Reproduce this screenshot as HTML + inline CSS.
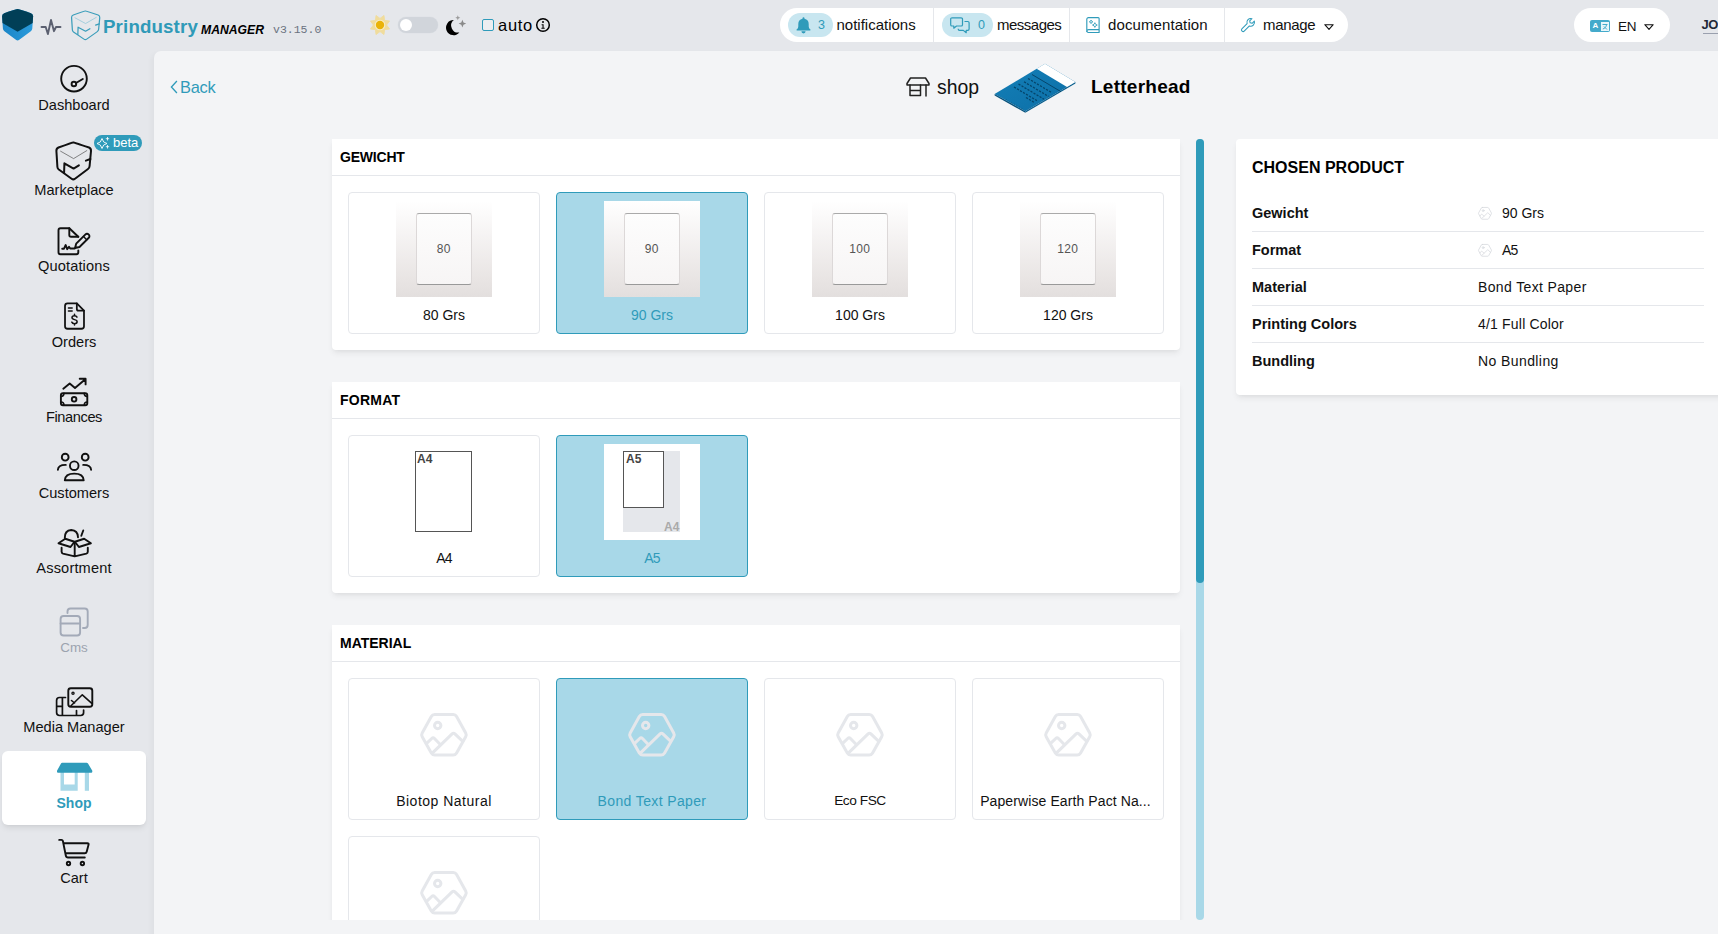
<!DOCTYPE html>
<html lang="en">
<head>
<meta charset="utf-8">
<title>Prindustry Manager - Shop - Letterhead</title>
<style>
*{box-sizing:border-box;margin:0;padding:0}
html,body{width:1718px;height:934px;overflow:hidden}
body{background:#e5e7eb;font-family:"Liberation Sans",sans-serif;color:#111;position:relative;font-size:15px}
.abs{position:absolute}
svg{display:block;overflow:visible}
/* ---------- top bar ---------- */
#top{position:absolute;left:0;top:0;width:1718px;height:51px}
.brand{position:absolute;left:103px;top:15px;font-size:18.700px;font-weight:bold;color:#2f9ab8;letter-spacing:.15px;line-height:24px;white-space:nowrap}
.mgr{position:absolute;left:201px;top:21.500px;font-size:12.200px;font-weight:bold;font-style:italic;color:#000;line-height:16px;white-space:nowrap}
.ver{position:absolute;left:273px;top:22px;font-family:"Liberation Mono",monospace;font-size:11.500px;color:#6b7280;line-height:16px;white-space:nowrap}
.toggle{position:absolute;left:398px;top:17px;width:40px;height:16px;border-radius:8px;background:#d1d5db;box-shadow:0 0 0 .5px #dfe2e7}
.toggle i{position:absolute;left:2px;top:2px;width:12px;height:12px;border-radius:50%;background:#fff}
.chk{position:absolute;left:482px;top:19px;width:12px;height:12px;border:1.5px solid #2f9bba;border-radius:2px;background:#eceef1}
.auto{position:absolute;left:498px;top:14px;font-size:16.500px;letter-spacing:.7px;line-height:22px;color:#000}
.pill{position:absolute;top:8px;height:34px;background:#fff;border-radius:17px}
.navtxt{position:absolute;top:0;line-height:34px;font-size:15px;color:#111;white-space:nowrap}
.sep{position:absolute;top:0;width:1px;height:34px;background:#e5e7eb}
.badge{position:absolute;top:5px;height:24px;border-radius:12px;background:#c8e6f0}
.badge span{position:absolute;top:0;line-height:24px;font-size:12.500px;color:#2f9bba}
/* ---------- sidebar ---------- */
.sb{position:absolute;left:0;width:148px;text-align:center;font-size:14.600px;line-height:20px;color:#111;white-space:nowrap}
.sbi{position:absolute}
/* ---------- main ---------- */
#main{position:absolute;left:154px;top:51px;width:1600px;height:900px;background:#f3f4f6;border-top-left-radius:7px;box-shadow:-3px 2px 5px rgba(0,0,0,.03)}
.panel{position:absolute;left:332px;width:848px;background:#fff;border-radius:0 0 4px 4px;box-shadow:0 4px 6px -1px rgba(0,0,0,.07),0 2px 4px -2px rgba(0,0,0,.05)}
.ph{height:37px;border-bottom:1px solid #e5e7eb;padding:0 0 0 8px;line-height:36px;font-size:14px;font-weight:bold;letter-spacing:0;text-transform:uppercase;color:#000}
.card{position:absolute;width:192px;height:142px;border:1px solid #e5e7eb;border-radius:4px;background:#fff}
.card.sel{background:#a8d8e8;border-color:#2f9bba}
.card .lbl{position:absolute;left:0;right:0;top:112px;text-align:center;font-size:14px;line-height:20px;color:#111;white-space:nowrap}
.card.sel .lbl{color:#2f9bba}
.img{position:absolute;left:47px;top:8px;width:96px;height:96px}
.gw{background:linear-gradient(#fff 0%,#fbfafa 15%,#e9e5e4 80%,#e3dfde 100%)}
.gw b{position:absolute;left:20px;top:12px;width:55.500px;height:72px;border-radius:3px;background:linear-gradient(#fdfdfd,#f7f5f5);border:1px solid #dcd8d8;border-top-color:#aaa;border-bottom-color:#999;font-weight:normal;font-size:12px;letter-spacing:.3px;color:#555;text-align:center;line-height:70px}
</style>
</head>
<body>
<div id="top"><svg class="abs" style="left:0;top:0" width="110" height="51" viewBox="0 0 110 51"><defs><linearGradient id="cb" x1="0" y1="0" x2="1" y2="0"><stop offset="0" stop-color="#1b85c6"/><stop offset="1" stop-color="#2a9bdc"/></linearGradient></defs>
<path d="M17.600 9Q18.500 9 31 13.200Q33.200 14 33.100 16.300L32.300 28.500Q32.200 30.200 30.800 31.200L19.300 39.800Q17.600 41.200 15.900 39.800L4.400 31.200Q3 30.200 2.900 28.500L2.100 16.300Q2 14 4.200 13.200Q16.700 9 17.600 9z" fill="url(#cb)"/>
<path d="M17.600 9Q18.500 9 31 13.200Q33.200 14 33.100 16.300L32.700 23L17.600 31.700L2.500 23L2.100 16.300Q2 14 4.200 13.200Q16.700 9 17.600 9z" fill="#013f57"/>
<path d="M41.500 27H45.700L47.900 34L51 20L54 31.200L56 27H60.500" fill="none" stroke="#5b6070" stroke-width="1.900" stroke-linecap="round" stroke-linejoin="round"/>
<g transform="translate(71.400 10.900) scale(.815 .775) translate(-56.200 -142.300)" fill="none" stroke="#3a9dba" stroke-linecap="round" stroke-linejoin="round"><path d="M73.300 142.400Q74 142.300 89 147.500Q91.200 148.500 91 151L89.600 166Q89.500 168 88 169L75 178.700Q73.300 180 71.600 178.700L58.800 169.500Q57.500 168.500 57.400 167L56.400 151Q56.200 148.500 58.500 147.500Q72.500 142.300 73.300 142.400z" stroke-width="1.500"/><path d="M60.600 151.200L73.600 158.600L86.800 150.600" stroke-width=".8" stroke="#7fc0d4"/><path d="M64.100 172.800L64.400 163.300L73.600 168.600L78.900 165.300" stroke-width="1.500"/><path d="M85.900 160.600L90.400 159" stroke-width="1.500"/></g></svg>
<div class="brand">Prindustry</div><div class="mgr">MANAGER</div><div class="ver">v3.15.0</div>
<svg class="abs" style="left:370px;top:15px" width="20" height="20" viewBox="0 0 20 20"><polygon points="13.98,0.39 14.67,5.33 19.61,6.02 16.60,10.00 19.61,13.98 14.67,14.67 13.98,19.61 10.00,16.60 6.02,19.61 5.33,14.67 0.39,13.98 3.40,10.00 0.39,6.02 5.33,5.33 6.02,0.39 10.00,3.40" fill="#f0dc9c" stroke="#f0dc9c" stroke-width=".8" stroke-linejoin="round"/><circle cx="10" cy="10" r="5.200" fill="#f8edc6"/><circle cx="10" cy="10" r="4.200" fill="#eab308"/></svg>
<div class="toggle"><i></i></div>
<svg class="abs" style="left:445px;top:14px" width="22" height="22" viewBox="0 0 22 22"><path d="M8.800 6A7.600 7.600 0 1 0 14.400 18.500A7.100 7.100 0 0 1 8.800 6z" fill="#000"/><path d="M12.800 1.300l.7 1.800 1.800.7-1.800.7-.7 1.800-.7-1.800-1.800-.7 1.800-.7z" fill="#9a9a9a"/><path d="M17.400 5.800l1.100 2.700 2.700 1.100-2.700 1.100-1.100 2.700-1.100-2.700-2.700-1.100 2.700-1.100z" fill="#8a8a8a"/></svg>
<div class="chk"></div><div class="auto">auto</div>
<svg class="abs" style="left:535px;top:17px" width="16" height="16" viewBox="0 0 16 16"><circle cx="8" cy="8" r="6.300" fill="none" stroke="#000" stroke-width="1.500"/><circle cx="8" cy="4.900" r="1" fill="#000"/><path d="M6.600 7.200h2v3.600h1.100v1H6.400v-1h1.100V8.200H6.600z" fill="#000"/></svg>
<div class="pill" style="left:780px;width:568px"><div class="badge" style="left:8px;width:44.500px"><span style="left:30px">3</span></div><svg class="abs" style="left:15.700px;top:9px" width="15" height="17" viewBox="0 0 15 17"><path d="M7.500.2a1 1 0 0 1 1 1v.6a5.200 5.200 0 0 1 4.200 5.100v2c0 1.400.5 2.500 1.500 3.400.6.500.3 1.300-.5 1.300H1.300c-.8 0-1.100-.8-.5-1.300 1-.9 1.500-2 1.500-3.400v-2a5.200 5.200 0 0 1 4.200-5.100v-.6a1 1 0 0 1 1-1z" fill="#2f9bba"/><path d="M5.400 14.300h4.200a2.100 2.100 0 0 1-4.200 0z" fill="#2f9bba"/></svg><div class="navtxt" style="left:56.500px">notifications</div><div class="sep" style="left:153px"></div><div class="badge" style="left:162px;width:50.500px"><span style="left:36px">0</span></div><svg class="abs" style="left:169.500px;top:9px" width="20" height="16" viewBox="0 0 20 16" fill="none" stroke="#2f9bba" stroke-width="1.200" stroke-linejoin="round"><path d="M2 .8h9.200a1.300 1.300 0 0 1 1.300 1.300v5.600a1.300 1.300 0 0 1-1.300 1.300H6.500L3.800 11.200V9H2A1.300 1.300 0 0 1 .7 7.700V2.100A1.300 1.300 0 0 1 2 .8z"/><path d="M14.500 4.500h3.300a1.300 1.300 0 0 1 1.300 1.300v6.300a1.300 1.300 0 0 1-1.300 1.300h-1.600v2.300l-2.900-2.300H9.500a1.300 1.300 0 0 1-1.300-1.300V11.700"/></svg><div class="navtxt" style="left:217px;letter-spacing:-.5px">messages</div><div class="sep" style="left:289px"></div><svg class="abs" style="left:306px;top:8.500px" width="14.300" height="16.100" viewBox="0 0 15 17" fill="none" stroke="#2f9bba" stroke-width="1.200" stroke-linejoin="round"><path d="M2.500 .7h10.300a1 1 0 0 1 1 1v11.600H2.800A2 2 0 0 0 .8 15.300V2.400A1.700 1.700 0 0 1 2.500 .7z"/><path d="M.8 15a1.700 1.700 0 0 0 1.700 1.400h11.300v-3"/><path d="M5.300 3.200l.6 1.300 1.300.6-1.300.6-.6 1.300-.6-1.300-1.300-.6 1.300-.6zM9.300 6l.8 1.700 1.700.8-1.700.8-.8 1.700-.8-1.700-1.700-.8 1.700-.8z" stroke-width=".9"/></svg><div class="navtxt" style="left:328px;letter-spacing:.1px">documentation</div><div class="sep" style="left:443.500px"></div><svg class="abs" style="left:460.500px;top:9.500px" width="14.500" height="14.500" viewBox="0 0 15 15" fill="none" stroke="#2f9bba" stroke-width="1.100" stroke-linejoin="round" stroke-linecap="round"><path d="M13.800 3.200L11.500 5.500 9.500 5 9 3 11.300.7A4 4 0 0 0 6.300 5.800L.9 11.200a1.500 1.500 0 0 0 0 2.100l.3.300a1.500 1.500 0 0 0 2.100 0L8.700 8.200A4 4 0 0 0 13.800 3.200z"/></svg><div class="navtxt" style="left:483px;letter-spacing:-.3px">manage</div><svg class="abs" style="left:543.500px;top:15.500px" width="10" height="6" viewBox="0 0 10 6" fill="none" stroke="#111" stroke-width="1.100" stroke-linejoin="round"><path d="M.8.700h8.400L5 5.300z"/></svg></div>
<div class="pill" style="left:1574px;width:96px"><div class="abs" style="left:16px;top:12px;width:20px;height:12px;border-radius:2px;background:#44aacb"></div><div class="abs" style="left:18.500px;top:12px;font-size:8px;line-height:12px;font-weight:bold;color:#fff">A</div><div class="abs" style="left:26.500px;top:13.500px;width:8px;height:9px;background:#e8f5fa"></div><svg class="abs" style="left:27.500px;top:14.500px" width="6" height="7" viewBox="0 0 6 7" fill="none" stroke="#44aacb" stroke-width="1"><path d="M.5 1.500h5M4.500 1.500C4.500 4 2.500 5.500 .8 6M2 3.500l3 3"/></svg><div class="navtxt" style="left:44px;top:1.500px;font-size:13.500px;letter-spacing:-.3px">EN</div><svg class="abs" style="left:69.500px;top:16px" width="10" height="6" viewBox="0 0 10 6" fill="none" stroke="#111" stroke-width="1.100" stroke-linejoin="round"><path d="M.8.700h8.400L5 5.300z"/></svg></div>
<div class="abs" style="left:1701.500px;top:16px;font-size:13px;line-height:18px;font-weight:bold;color:#1f2937;white-space:nowrap;height:19px;letter-spacing:-.6px">JOHN</div><div class="abs" style="left:1703px;top:33px;width:20px;height:1px;background:#9aa0ae"></div></div>
<div id="side"><div class="abs" style="left:2px;top:751px;width:144px;height:74px;background:#fff;border-radius:6px;box-shadow:0 4px 6px -1px rgba(0,0,0,.08),0 2px 4px -2px rgba(0,0,0,.06)"></div>
<svg class="abs" style="left:0;top:0" width="154" height="934" viewBox="0 0 154 934" fill="none" stroke="#111" stroke-width="1.900" stroke-linecap="round" stroke-linejoin="round"><g id="i-dash"><circle cx="74" cy="78.700" r="12.800"/><circle cx="73.900" cy="84" r="2.300"/><path d="M76 83l6.800-4"/></g><g id="i-market"><path d="M73.300 142.400Q74 142.300 89 147.500Q91.200 148.500 91 151L89.600 166Q89.500 168 88 169L75 178.700Q73.300 180 71.600 178.700L58.800 169.500Q57.500 168.500 57.400 167L56.400 151Q56.200 148.500 58.500 147.500Q72.500 142.300 73.300 142.400z" stroke-width="2"/><path d="M60.600 151.200L73.600 158.600L86.800 150.600" stroke="#555" stroke-width=".7"/><path d="M64.100 172.800L64.400 163.300L73.600 168.600L78.900 165.300" stroke-width="2"/><path d="M85.900 160.600L90.400 159" stroke-width="2"/></g>
<g id="i-quot"><path d="M78.300 250.500V252.300Q78.300 254.300 76.300 254.300H60.500Q58.500 254.300 58.500 252.300V230.200Q58.500 228.200 60.500 228.200H69.300L78.300 236.800"/><path d="M69.300 228.200V235Q69.300 236.800 71.100 236.800H78.300"/><path d="M62.200 248.700h1.800l1.700-3.700 1.500 4.200 1.800-2.400 1.200 1.700h4.500"/><path d="M75 248l1.200-4.300L85.500 234.400a2.100 2.100 0 0 1 3 0l.3.300a2.100 2.100 0 0 1 0 3L79.500 247z"/><path d="M83.500 236.500l3.200 3.200" stroke-width="1.400"/></g>
<g id="i-ord" transform="translate(74.500 316.100) scale(.93) translate(-74.500 -316.100)"><path d="M77 302.500H67Q64.300 302.500 64.300 305.200V327Q64.300 329.700 67 329.700H82Q84.700 329.700 84.700 327V310.200z"/><path d="M77 302.500V308.400Q77 310.200 78.800 310.200H84.700"/><path d="M68 307.300h4M68 310.700h4" stroke-width="1.600"/><path d="M77.200 317.200Q76.500 315.700 74.500 315.700Q71.800 315.700 71.800 317.700Q71.800 319.300 74.500 319.900Q77.300 320.500 77.300 322.200Q77.300 324.200 74.500 324.200Q72.300 324.200 71.600 322.600M74.500 314.200v1.500M74.500 324.200v1.500" stroke-width="1.600"/></g>
<g id="i-fin"><rect x="60.900" y="393.300" width="26.400" height="12" rx="2"/><circle cx="74.100" cy="399.300" r="2.300"/><path d="M60.900 396.500Q64 396.500 64 393.300M87.300 396.500Q84.200 396.500 84.200 393.300M60.900 402.100Q64 402.100 64 405.300M87.300 402.100Q84.200 402.100 84.200 405.300" stroke-width="1.500"/><path d="M63.300 388.700L69.700 383.500L75 388L85.300 379.200M79.700 378.800H85.600V384.400"/></g>
<g id="i-cust"><circle cx="74.250" cy="465.700" r="4.300"/><path d="M64.800 480.200Q65.200 473.600 74.250 473.600Q83.300 473.600 83.700 480.200z"/><circle cx="65.200" cy="457.200" r="3.400"/><circle cx="85.200" cy="457.200" r="3.400"/><path d="M57.900 469.800Q58.200 464.800 65.800 464.900M91.100 469.800Q90.800 464.800 83.200 464.900"/></g>
<g id="i-assort"><path d="M61.600 547.800V551.800Q61.600 553.200 63 553.600L74.700 556.400L86.400 553.600Q87.800 553.200 87.800 551.800V547.800M74.700 542.500V556"/><path d="M65.250 538.750L74.500 541.750L70.500 547L58.500 543.250zM84.150 538.750L74.900 541.750L78.900 547L90.900 543.250z"/><path d="M64.800 538Q64.600 530.500 71.250 530Q77.800 530.300 78 537.250M83.250 530.500L81.300 535.750"/></g>
<g id="i-cms" stroke="#a3aab8"><rect x="60.600" y="616" width="19.500" height="19.500" rx="3"/><path d="M60.600 623.500H80.100"/><path d="M67.500 613V611.500Q67.500 608.500 70.500 608.500H84.700Q87.700 608.500 87.700 611.500V625Q87.700 628 84.700 628H83"/></g>
<g id="i-media"><rect x="68.300" y="688.200" width="24" height="18.600" rx="2.500"/><circle cx="73" cy="693.200" r="1.100" stroke-width="1.300"/><path d="M71 705.800L82.300 694.800L91.800 703.400M71.500 700.500L74.500 703" stroke-width="1.600"/><path d="M65.500 697.500H59.500Q56.600 697.500 56.600 700.400V712.600Q56.600 715.500 59.500 715.500H80.700Q83.600 715.500 83.600 712.600V710M62.400 697.500V715.500M56.600 706.300H62.400M76.500 710.500V715.500" stroke-width="1.700"/></g>
<g id="i-shop" stroke="none"><path d="M60.500 772H77.700V790.800H60.500zM64 772V784.500H74.700V772z" fill="#a8d8e8" fill-rule="evenodd"/><path d="M84.800 772H89V790.800H84.800z" fill="#a8d8e8"/><path d="M62.200 762.800H86.600Q87.500 762.800 88 763.600L92.300 770.800V771.800Q92.300 772.800 91.300 772.800H58Q57 772.800 57 771.800V770.800L61 763.600Q61.400 762.800 62.200 762.800z" fill="#2f9bba"/></g>
<g id="i-cart"><path d="M59.200 839.900H61.500Q62.600 839.900 62.900 841L65.800 855.500Q66.200 857.500 68 857.500H84.800M63.400 843.200H87.500Q88.900 843.200 88.600 844.600L86.700 851.800Q86.300 853.300 84.800 853.300H65.400"/><circle cx="68.500" cy="863.500" r="1.700"/><circle cx="82.400" cy="863.500" r="1.700"/></g>
</svg>
<div class="abs" style="left:94px;top:135px;width:48px;height:16px;border-radius:8px;background:#2f9bba"></div>
<svg class="abs" style="left:97px;top:136.500px" width="14" height="12" viewBox="0 0 14 12" fill="none" stroke="#fff" stroke-width=".9" stroke-linejoin="round"><path d="M5 1.500L6.700 5L10 6.500L6.700 8L5 11.500L3.300 8L0 6.500L3.300 5z"/><path d="M10.500 0v3.500M8.800 1.700h3.400M10.500 8v3.500M8.800 9.700h3.400" stroke-width=".8"/></svg>
<div class="abs" style="left:113px;top:135px;font-size:13px;line-height:16px;color:#fff">beta</div>
<div class="sb" style="top:95px;">Dashboard</div>
<div class="sb" style="top:180px;">Marketplace</div>
<div class="sb" style="top:256px;letter-spacing:.12px;">Quotations</div>
<div class="sb" style="top:332px;">Orders</div>
<div class="sb" style="top:407px;letter-spacing:-.4px;">Finances</div>
<div class="sb" style="top:483px;">Customers</div>
<div class="sb" style="top:558px;letter-spacing:.15px;">Assortment</div>
<div class="sb" style="top:638px;color:#9ca3af;font-size:13.400px;">Cms</div>
<div class="sb" style="top:717px;">Media Manager</div>
<div class="sb" style="top:793px;color:#2f9bba;font-weight:bold;font-size:14px;">Shop</div>
<div class="sb" style="top:868px;">Cart</div></div>
<div id="main"></div>
<svg class="abs" style="left:170px;top:80px" width="8" height="14" viewBox="0 0 8 14" fill="none" stroke="#2f9bba" stroke-width="1.300" stroke-linecap="butt" stroke-linejoin="miter"><path d="M6.900 1L1.400 7l5.500 6"/></svg>
<div class="abs" style="left:180px;top:76px;font-size:16.400px;letter-spacing:-.25px;line-height:22px;color:#2f9bba">Back</div>
<svg class="abs" style="left:906px;top:77px" width="24" height="20" viewBox="0 0 24 20" fill="none" stroke="#222" stroke-width="1.500" stroke-linejoin="round" stroke-linecap="round"><path d="M4.500 1h15l3.500 5.500v1.500H1V6.500z"/><path d="M4 8v10.500h10.500V8M4 13.500h10.500M20 8v11"/></svg>
<div class="abs" style="left:937px;top:74px;font-size:19.400px;line-height:26px;color:#111">shop</div>
<div class="abs" style="left:1091px;top:75px;font-size:19px;letter-spacing:.25px;line-height:24px;font-weight:bold;color:#000">Letterhead</div>
<svg class="abs" style="left:994px;top:63px" width="82" height="51" viewBox="0 0 82 51"><defs><linearGradient id="lg1" x1="0" y1="0" x2="1" y2="1"><stop offset="0" stop-color="#1480b8"/><stop offset="1" stop-color="#0c6ea6"/></linearGradient></defs><path d="M.6 31L51 .8L81.400 19L31.300 48.200z" fill="url(#lg1)"/><path d="M.6 31L31.300 48.200V49.800L.6 32.500z" fill="#07527c"/><path d="M31.300 48.200L81.400 19V20.500L31.300 49.800z" fill="#0a5f8e"/><path d="M51 .8L81.400 19L73 23.900L42.600 5.800z" fill="#fff"/><path d="M38 11.500L67 28.700" stroke="#05456b" stroke-width="1" fill="none"/><g stroke="#05456b" stroke-width="1.300" stroke-dasharray="2.200 1.300" fill="none"><path d="M34 15.500L58 29.800M30 18.800L54.500 33.400M24.500 21L50 36.200M20 24L44 38.300M32 34.500L41 39.900"/></g><path d="M12 36.300L30 46.400" stroke="#0a5f8e" stroke-width=".8" stroke-dasharray="1 2" fill="none"/></svg>
<div class="panel" style="top:139px;height:211px"><div class="ph" style="letter-spacing:-.2px">Gewicht</div><div class="card" style="left:16px;top:53px"><div class="img gw"><b>80</b></div><div class="lbl">80 Grs</div></div><div class="card sel" style="left:224px;top:53px"><div class="img gw"><b>90</b></div><div class="lbl">90 Grs</div></div><div class="card" style="left:432px;top:53px"><div class="img gw"><b>100</b></div><div class="lbl">100 Grs</div></div><div class="card" style="left:640px;top:53px"><div class="img gw"><b>120</b></div><div class="lbl">120 Grs</div></div></div>
<div class="panel" style="top:382px;height:211px"><div class="ph" style="letter-spacing:.25px">Format</div><div class="card" style="left:16px;top:53px"><div class="img"><div class="abs" style="left:19px;top:7px;width:57px;height:81px;border:1px solid #555;background:#fff"></div><div class="abs" style="left:21px;top:7px;font-size:12px;font-weight:bold;color:#444;line-height:16px">A4</div></div><div class="lbl" style="letter-spacing:-.9px">A4</div></div><div class="card sel" style="left:224px;top:53px"><div class="img" style="background:#fff"><div class="abs" style="left:19px;top:7px;width:57px;height:81px;background:#e5e7eb"></div><div class="abs" style="left:19px;top:7px;width:41px;height:57px;border:1px solid #555;background:#fff"></div><div class="abs" style="left:22px;top:7px;font-size:12px;font-weight:bold;color:#444;line-height:16px">A5</div><div class="abs" style="left:60px;top:75px;font-size:12px;font-weight:bold;color:#aaa;line-height:16px">A4</div></div><div class="lbl" style="letter-spacing:-.9px">A5</div></div></div>
<div class="abs" style="left:320px;top:600px;width:880px;height:320px;overflow:hidden"><div class="panel" style="left:12px;top:25px;height:400px"><div class="ph">Material</div><div class="card" style="left:16px;top:53px"><svg class="abs" style="left:71px;top:34px" width="48" height="44" viewBox="0 0 48 44" fill="none" stroke="#e5e7eb" stroke-width="3" stroke-linejoin="round" stroke-linecap="round"><path d="M14.800 1.600h18.300a4 4 0 0 1 3.500 2l9.100 16.300a4 4 0 0 1 0 3.900l-9.100 16.300a4 4 0 0 1-3.500 2H14.800a4 4 0 0 1-3.500-2L2.200 23.800a4 4 0 0 1 0-3.900L11.300 3.600a4 4 0 0 1 3.500-2z"/><circle cx="17.700" cy="12.500" r="3.200"/><path d="M6.900 30.100l4.800-4.600a2 2 0 0 1 2.800 0l5.500 5.700M12.800 39.600l19.300-18.700a2 2 0 0 1 2.800 0l7.600 7.300"/></svg><div class="lbl" style="letter-spacing:0.5px">Biotop Natural</div></div><div class="card sel" style="left:224px;top:53px"><svg class="abs" style="left:71px;top:34px" width="48" height="44" viewBox="0 0 48 44" fill="none" stroke="#e5e7eb" stroke-width="3" stroke-linejoin="round" stroke-linecap="round"><path d="M14.800 1.600h18.300a4 4 0 0 1 3.500 2l9.100 16.300a4 4 0 0 1 0 3.900l-9.100 16.300a4 4 0 0 1-3.500 2H14.800a4 4 0 0 1-3.500-2L2.200 23.800a4 4 0 0 1 0-3.900L11.300 3.600a4 4 0 0 1 3.500-2z"/><circle cx="17.700" cy="12.500" r="3.200"/><path d="M6.900 30.100l4.800-4.600a2 2 0 0 1 2.800 0l5.500 5.700M12.800 39.600l19.300-18.700a2 2 0 0 1 2.800 0l7.600 7.300"/></svg><div class="lbl" style="letter-spacing:0.37px">Bond Text Paper</div></div><div class="card" style="left:432px;top:53px"><svg class="abs" style="left:71px;top:34px" width="48" height="44" viewBox="0 0 48 44" fill="none" stroke="#e5e7eb" stroke-width="3" stroke-linejoin="round" stroke-linecap="round"><path d="M14.800 1.600h18.300a4 4 0 0 1 3.500 2l9.100 16.300a4 4 0 0 1 0 3.900l-9.100 16.300a4 4 0 0 1-3.500 2H14.800a4 4 0 0 1-3.500-2L2.200 23.800a4 4 0 0 1 0-3.900L11.300 3.600a4 4 0 0 1 3.500-2z"/><circle cx="17.700" cy="12.500" r="3.200"/><path d="M6.900 30.100l4.800-4.600a2 2 0 0 1 2.800 0l5.500 5.700M12.800 39.600l19.300-18.700a2 2 0 0 1 2.800 0l7.600 7.300"/></svg><div class="lbl" style="font-size:13.700px;letter-spacing:-.45px">Eco FSC</div></div><div class="card" style="left:640px;top:53px"><svg class="abs" style="left:71px;top:34px" width="48" height="44" viewBox="0 0 48 44" fill="none" stroke="#e5e7eb" stroke-width="3" stroke-linejoin="round" stroke-linecap="round"><path d="M14.800 1.600h18.300a4 4 0 0 1 3.500 2l9.100 16.300a4 4 0 0 1 0 3.900l-9.100 16.300a4 4 0 0 1-3.500 2H14.800a4 4 0 0 1-3.500-2L2.200 23.800a4 4 0 0 1 0-3.900L11.300 3.600a4 4 0 0 1 3.500-2z"/><circle cx="17.700" cy="12.500" r="3.200"/><path d="M6.900 30.100l4.800-4.600a2 2 0 0 1 2.800 0l5.500 5.700M12.800 39.600l19.300-18.700a2 2 0 0 1 2.800 0l7.600 7.300"/></svg><div class="lbl" style="letter-spacing:0.1px;right:5px">Paperwise Earth Pact Na...</div></div><div class="card" style="left:16px;top:211px"><svg class="abs" style="left:71px;top:34px" width="48" height="44" viewBox="0 0 48 44" fill="none" stroke="#e5e7eb" stroke-width="3" stroke-linejoin="round" stroke-linecap="round"><path d="M14.800 1.600h18.300a4 4 0 0 1 3.500 2l9.100 16.300a4 4 0 0 1 0 3.900l-9.100 16.300a4 4 0 0 1-3.500 2H14.800a4 4 0 0 1-3.500-2L2.200 23.800a4 4 0 0 1 0-3.900L11.300 3.600a4 4 0 0 1 3.500-2z"/><circle cx="17.700" cy="12.500" r="3.200"/><path d="M6.900 30.100l4.800-4.600a2 2 0 0 1 2.800 0l5.500 5.700M12.800 39.600l19.300-18.700a2 2 0 0 1 2.800 0l7.600 7.300"/></svg><div class="lbl">&nbsp;</div></div></div></div>
<div class="abs" style="left:1196px;top:139px;width:8px;height:781px;border-radius:4px;background:#a8d8e8"></div>
<div class="abs" style="left:1196px;top:139px;width:8px;height:444px;border-radius:4px;background:#2f9bba"></div>
<div class="abs" style="left:1236px;top:139px;width:520px;height:256px;background:#fff;border-radius:4px;box-shadow:0 4px 6px -1px rgba(0,0,0,.07),0 2px 4px -2px rgba(0,0,0,.05)"><div class="abs" style="left:16px;top:18px;font-size:16px;line-height:22px;font-weight:bold;letter-spacing:0;color:#000;white-space:nowrap">CHOSEN PRODUCT</div><div class="abs" style="left:16px;top:56px;width:452px;height:37px;border-bottom:1px solid #e5e7eb;font-size:14px;line-height:37px;white-space:nowrap"><b style="position:absolute;left:0;font-size:14.500px">Gewicht</b><svg class="abs" style="left:226px;top:12px" width="14" height="12.8" viewBox="0 0 48 44" fill="none" stroke="#d4d7dc" stroke-width="2.6" stroke-linejoin="round" stroke-linecap="round"><path d="M14.800 1.600h18.300a4 4 0 0 1 3.500 2l9.100 16.300a4 4 0 0 1 0 3.900l-9.100 16.300a4 4 0 0 1-3.500 2H14.800a4 4 0 0 1-3.500-2L2.200 23.800a4 4 0 0 1 0-3.900L11.300 3.600a4 4 0 0 1 3.500-2z"/><circle cx="17.700" cy="12.500" r="3.200"/><path d="M6.900 30.100l4.800-4.600a2 2 0 0 1 2.800 0l5.500 5.700M12.800 39.600l19.300-18.700a2 2 0 0 1 2.800 0l7.600 7.300"/></svg><span style="position:absolute;left:250px;letter-spacing:0px">90 Grs</span></div><div class="abs" style="left:16px;top:93px;width:452px;height:37px;border-bottom:1px solid #e5e7eb;font-size:14px;line-height:37px;white-space:nowrap"><b style="position:absolute;left:0;font-size:14.500px">Format</b><svg class="abs" style="left:226px;top:12px" width="14" height="12.8" viewBox="0 0 48 44" fill="none" stroke="#d4d7dc" stroke-width="2.6" stroke-linejoin="round" stroke-linecap="round"><path d="M14.800 1.600h18.300a4 4 0 0 1 3.500 2l9.100 16.300a4 4 0 0 1 0 3.900l-9.100 16.300a4 4 0 0 1-3.500 2H14.800a4 4 0 0 1-3.500-2L2.200 23.800a4 4 0 0 1 0-3.900L11.300 3.600a4 4 0 0 1 3.500-2z"/><circle cx="17.700" cy="12.500" r="3.200"/><path d="M6.900 30.100l4.800-4.600a2 2 0 0 1 2.800 0l5.500 5.700M12.800 39.600l19.300-18.700a2 2 0 0 1 2.800 0l7.600 7.300"/></svg><span style="position:absolute;left:250px;letter-spacing:-0.8px">A5</span></div><div class="abs" style="left:16px;top:130px;width:452px;height:37px;border-bottom:1px solid #e5e7eb;font-size:14px;line-height:37px;white-space:nowrap"><b style="position:absolute;left:0;font-size:14.500px">Material</b><span style="position:absolute;left:226px;letter-spacing:0.36px">Bond Text Paper</span></div><div class="abs" style="left:16px;top:167px;width:452px;height:37px;border-bottom:1px solid #e5e7eb;font-size:14px;line-height:37px;white-space:nowrap"><b style="position:absolute;left:0;font-size:14.500px">Printing Colors</b><span style="position:absolute;left:226px;letter-spacing:0.19px">4/1 Full Color</span></div><div class="abs" style="left:16px;top:204px;width:452px;height:37px;font-size:14px;line-height:37px;white-space:nowrap"><b style="position:absolute;left:0;font-size:14.500px">Bundling</b><span style="position:absolute;left:226px;letter-spacing:0.41px">No Bundling</span></div></div>
</body>
</html>
